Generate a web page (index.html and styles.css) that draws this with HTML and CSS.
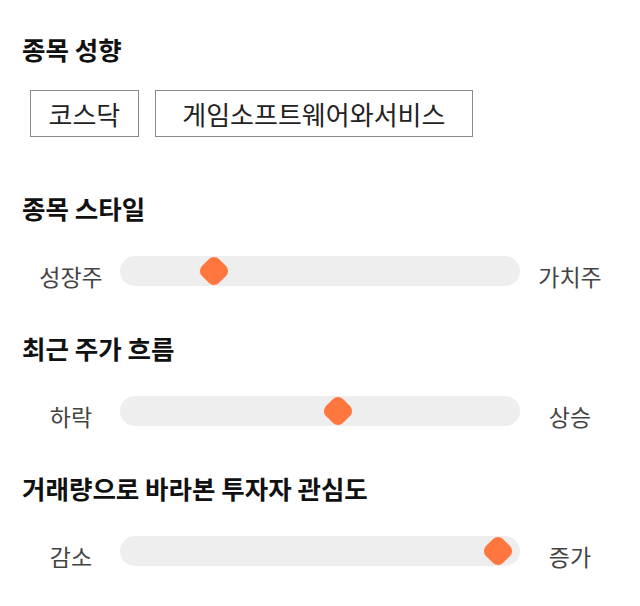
FILE: index.html
```html
<html>

<head>
  <meta charset="utf-8">
  <link rel="stylesheet" href="styles.css">
</head>

<body>
  <div id="profile">
    <h2 class="sectionTitle">종목 성향</h2>
    <div class="tagList">
      <span class="tag">코스닥</span>
      <span class="tag tag-wide">게임소프트웨어와서비스</span>
    </div>

    <h2 class="sectionTitle">종목 스타일</h2>
    <div class="scaleRow">
      <span class="scaleLabel">성장주</span>
      <div class="scaleTrack">
        <span class="scaleThumb" style="left: 23.6%"></span>
      </div>
      <span class="scaleLabel">가치주</span>
    </div>

    <h2 class="sectionTitle">최근 주가 흐름</h2>
    <div class="scaleRow">
      <span class="scaleLabel">하락</span>
      <div class="scaleTrack">
        <span class="scaleThumb" style="left: 54.4%"></span>
      </div>
      <span class="scaleLabel">상승</span>
    </div>

    <h2 class="sectionTitle">거래량으로 바라본 투자자 관심도</h2>
    <div class="scaleRow">
      <span class="scaleLabel">감소</span>
      <div class="scaleTrack">
        <span class="scaleThumb" style="left: 94.5%"></span>
      </div>
      <span class="scaleLabel">증가</span>
    </div>
  </div>
</body>

</html>
```

FILE: styles.css
```css
body {
  margin: 0;
  color: #111111;
  font-family: "Noto Sans CJK KR", "Noto Sans", sans-serif;
  background: #ffffff;
}

#profile {
  padding: 34px 20px 0 22px;
}

.sectionTitle {
  margin: 47px 0 0 0;
  font-size: 25.5px;
  font-weight: bold;
  line-height: 30px;
}

#profile > .sectionTitle:first-child {
  margin-top: 0;
}

.tagList {
  display: flex;
  gap: 16px;
  margin: 26px 0 56px 8px;
}

.tag {
  display: inline-block;
  height: 45px;
  line-height: 45px;
  padding: 0 17.5px;
  border: 1px solid #8a8a8a;
  font-size: 26px;
  color: #222222;
}

.tag-wide {
  padding: 0 26.5px;
}

.tagList + .sectionTitle {
  margin-top: 0;
}

.scaleRow {
  display: grid;
  grid-template-columns: 98px 1fr 100px;
  grid-template-rows: 30px;
  align-items: center;
  margin-top: 33px;
}

.scaleLabel {
  text-align: center;
  font-size: 23px;
  line-height: 30px;
  color: #444444;
  padding-top: 10px;
}

.scaleTrack {
  position: relative;
  height: 30px;
  border-radius: 15px;
  background: #eeeeee;
}

.scaleThumb {
  position: absolute;
  top: 50%;
  width: 24px;
  height: 24px;
  border-radius: 7px;
  background: #ff763f;
  transform: translate(-50%, -50%) rotate(45deg);
}
```
